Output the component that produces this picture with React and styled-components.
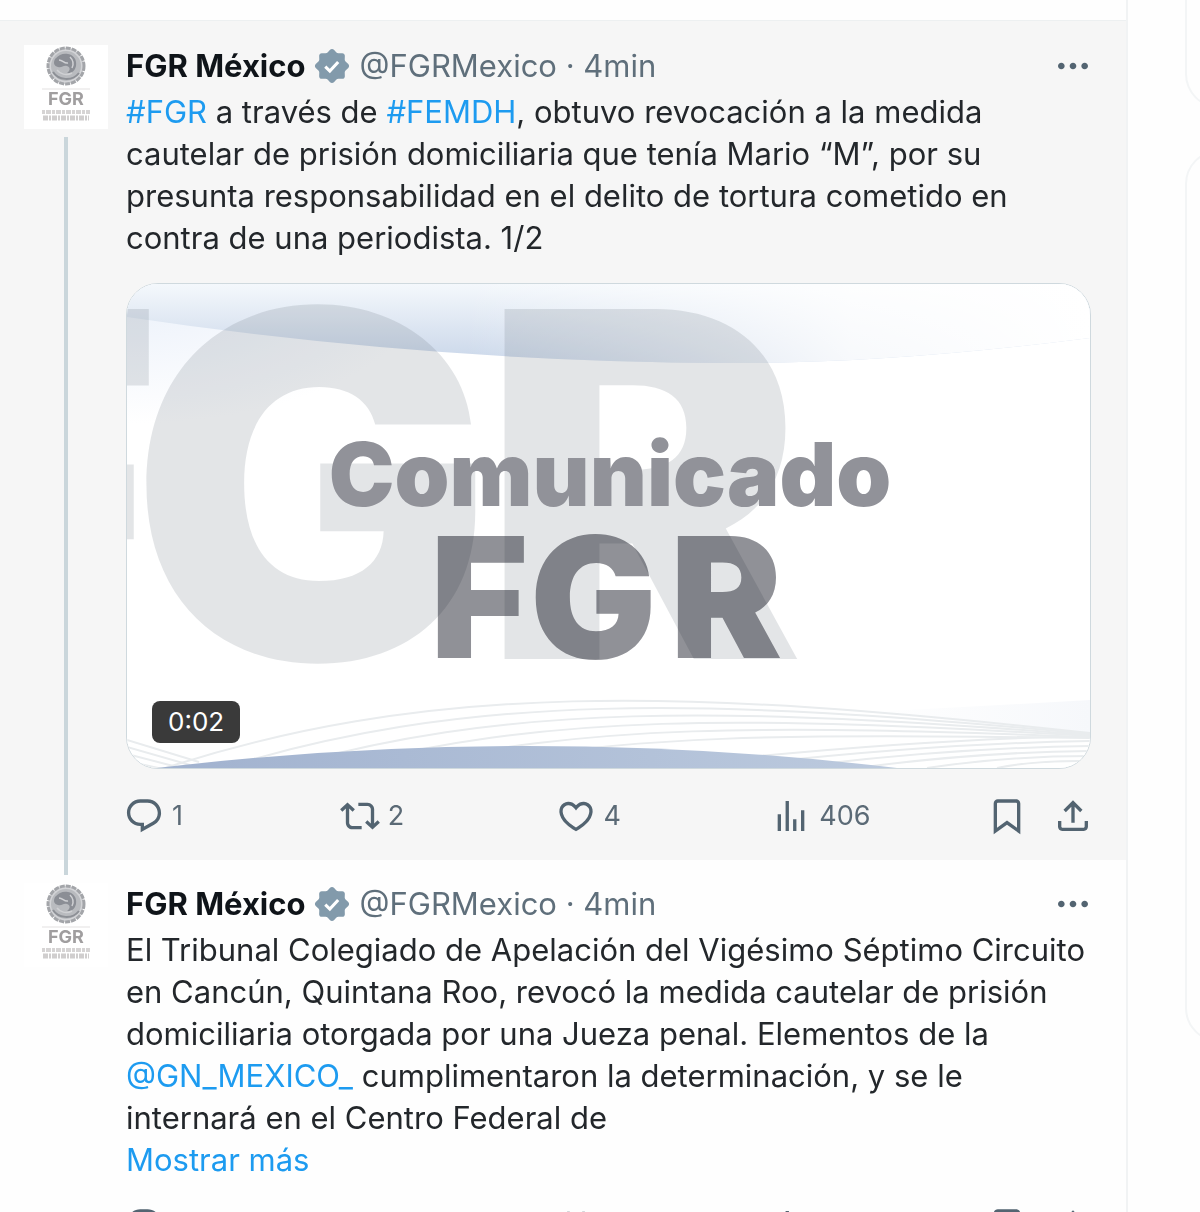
import React from 'react'
import styled, { createGlobalStyle } from 'styled-components'

const GlobalStyle = createGlobalStyle`
  * {
    box-sizing: border-box;
  }
  body {
    margin: 0;
    background: #fefefe;
    color: #23272b;
    font-family: Inter, "Noto Sans", sans-serif;
    font-size: 31px;
    line-height: 42px;
  }
`

const Page = styled.div`
  display: grid;
  grid-template-columns: minmax(0, 1fr) 72px;
  height: 100vh;
  overflow: hidden;
`

const Timeline = styled.main`
  border-right: 2px solid #f1f3f4;
  padding-top: 20px;
  overflow: hidden;
`

const Tweet = styled.article`
  display: flex;
  gap: 18px;
  padding: 0 35px 0 24px;
  background: ${({ $active }) => ($active ? '#f6f6f6' : '#fefefe')};
  border-top: ${({ $active }) => ($active ? '1px solid #edf0f1' : 'none')};
`

const AvatarColumn = styled.div`
  display: flex;
  flex-direction: column;
  align-items: center;
  flex: 0 0 84px;
`

const LineIn = styled.div`
  width: 4px;
  height: 15px;
  margin-bottom: ${({ $on }) => ($on ? 8 : 9)}px;
  background: ${({ $on }) => ($on ? '#cad6db' : 'transparent')};
`

const LineOut = styled.div`
  width: 4px;
  flex: 1;
  margin-top: 8px;
  background: #cad6db;
`

const Avatar = styled.a`
  display: block;
  width: 84px;
  height: 84px;
  background: #fff;

  svg {
    display: block;
  }
`

const Content = styled.div`
  flex: 1;
  min-width: 0;
  padding: ${({ $threaded }) => ($threaded ? 23 : 24)}px 0 24px;
`

const Header = styled.header`
  display: flex;
  align-items: center;
  margin: 0 -2px 4px 0;
`

const Name = styled.a`
  color: #0f1419;
  font-weight: 700;
  text-decoration: none;
`

const Badge = styled.svg`
  width: 40px;
  height: 40px;
  margin: 0 8px 0 6px;
  fill: #829aab;
`

const Meta = styled.span`
  flex: 1;
  color: #5f6f7b;

  a {
    color: inherit;
    text-decoration: none;
  }
`

const Text = styled.p`
  margin: 0;
`

const Line = styled.span`
  display: block;
`

const Link = styled.a`
  color: #1d9bf0;
  text-decoration: none;
`

const Media = styled.div`
  position: relative;
  margin-top: 24px;
  border: 1px solid #cfd9de;
  border-radius: 32px;
  overflow: hidden;
  background: #fff;

  svg {
    display: block;
    width: 100%;
  }
`

const Duration = styled.span`
  position: absolute;
  left: 25px;
  bottom: 25px;
  padding: 0 16px;
  border-radius: 8px;
  background: #3a3a3a;
  color: #fff;
  font-size: 26px;
`

const Actions = styled.div`
  display: flex;
  align-items: center;
  margin: ${({ $afterMedia }) => ($afterMedia ? 27 : 25)}px -2px 0;
`

const IconButton = styled.button`
  display: flex;
  align-items: center;
  gap: 8px;
  flex: ${({ $grow }) => ($grow ? '1' : 'none')};
  margin-left: ${({ $space }) => $space || 0}px;
  padding: 0;
  border: 0;
  background: none;
  color: #5b6a76;
  font-family: inherit;
  font-size: 27px;
  line-height: 40px;
  cursor: pointer;

  svg {
    width: 40px;
    height: 40px;
    fill: #536471;
  }
`

const Sidebar = styled.aside`
  display: flex;
  flex-direction: column;
  gap: 42px;
  padding-left: 57px;
  overflow: hidden;
`

const Card = styled.section`
  flex: none;
  width: 735px;
  height: ${({ $height }) => $height}px;
  border: 2px solid #f3f5f6;
  border-top-width: ${({ $cut }) => ($cut ? 0 : 2)}px;
  border-radius: ${({ $cut }) => ($cut ? '0 0 34px 34px' : '34px')};
`

const paths = {
  reply:
    'M1.751 10c0-4.42 3.584-8 8.005-8h4.366c4.49 0 8.129 3.64 8.129 8.13 0 2.96-1.607 5.68-4.196 7.11l-8.054 4.46v-3.69h-.067c-4.49.1-8.183-3.51-8.183-8.01zm8.005-6c-3.317 0-6.005 2.69-6.005 6 0 3.37 2.77 6.08 6.138 6.01l.351-.01h1.761v2.3l5.087-2.81c1.951-1.08 3.163-3.13 3.163-5.36 0-3.39-2.744-6.13-6.129-6.13H9.756z',
  repost:
    'M4.5 3.88l4.432 4.14-1.364 1.46L5.5 7.55V16c0 1.1.896 2 2 2H13v2H7.5c-2.209 0-4-1.79-4-4V7.55L1.432 9.48.068 8.02 4.5 3.88zM16.5 6H11V4h5.5c2.209 0 4 1.79 4 4v8.45l2.068-1.93 1.364 1.46-4.432 4.14-4.432-4.14 1.364-1.46 2.068 1.93V8c0-1.1-.896-2-2-2z',
  like: 'M16.697 5.5c-1.222-.06-2.679.51-3.89 2.16l-.805 1.09-.806-1.09C9.984 6.01 8.526 5.44 7.304 5.5c-1.243.07-2.349.78-2.91 1.91-.552 1.12-.633 2.78.479 4.82 1.074 1.97 3.257 4.27 7.129 6.61 3.87-2.34 6.052-4.64 7.126-6.61 1.111-2.04 1.03-3.7.477-4.82-.561-1.13-1.666-1.84-2.908-1.91zm4.187 7.69c-1.351 2.48-4.001 5.12-8.379 7.67l-.503.3-.504-.3c-4.379-2.55-7.029-5.19-8.382-7.67-1.36-2.5-1.41-4.86-.514-6.67.887-1.79 2.647-2.91 4.601-3.01 1.651-.09 3.368.56 4.798 2.01 1.429-1.45 3.146-2.1 4.796-2.01 1.954.1 3.714 1.22 4.601 3.01.896 1.81.846 4.17-.514 6.67z',
  views: 'M8.75 21V3h2v18h-2zM18 21V8.5h2V21h-2zM4 21l.004-10h2L6 21H4zm9.248 0v-7h2v7h-2z',
  bookmark:
    'M4 4.5C4 3.12 5.119 2 6.5 2h11C18.881 2 20 3.12 20 4.5v18.44l-8-5.71-8 5.71V4.5zM6.5 4c-.276 0-.5.22-.5.5v14.56l6-4.29 6 4.29V4.5c0-.28-.224-.5-.5-.5h-11z',
  share:
    'M12 2.59l5.7 5.7-1.41 1.42L13 6.41V16h-2V6.41l-3.3 3.3-1.41-1.42L12 2.59zM21 15l-.02 3.51c0 1.38-1.12 2.49-2.5 2.49H5.5C4.11 21 3 19.88 3 18.5V15h2v3.5c0 .28.22.5.5.5h12.98c.28 0 .5-.22.5-.5L19 15h2z',
  more: 'M3 12c0-1.1.9-2 2-2s2 .9 2 2-.9 2-2 2-2-.9-2-2zm9 2c1.1 0 2-.9 2-2s-.9-2-2-2-2 .9-2 2 .9 2 2 2zm7 0c1.1 0 2-.9 2-2s-.9-2-2-2-2 .9-2 2 .9 2 2 2z',
}

function Icon({ name }) {
  return (
    <svg viewBox="0 0 24 24" aria-hidden="true">
      <path d={paths[name]} />
    </svg>
  )
}

function Verified() {
  return (
    <Badge viewBox="0 0 22 22" role="img" aria-label="Cuenta verificada">
      <path d="M12.05 2.056c-.568-.608-1.532-.608-2.1 0l-1.393 1.49c-.284.303-.685.47-1.1.455L5.42 3.932c-.832-.028-1.514.654-1.486 1.486l.069 2.039c.014.415-.152.816-.456 1.1l-1.49 1.392c-.608.568-.608 1.533 0 2.101l1.49 1.393c.304.284.47.684.456 1.1l-.07 2.038c-.027.832.655 1.514 1.487 1.486l2.038-.069c.415-.014.816.152 1.1.455l1.392 1.49c.569.609 1.533.609 2.102 0l1.393-1.49c.283-.303.684-.47 1.099-.455l2.038.069c.832.028 1.515-.654 1.486-1.486L18 14.542c-.015-.415.152-.815.455-1.099l1.49-1.393c.608-.568.608-1.533 0-2.101l-1.49-1.393c-.303-.283-.47-.684-.455-1.1l.068-2.038c.029-.832-.654-1.514-1.486-1.486l-2.038.07c-.415.013-.816-.153-1.1-.456z" />
      <path d="M7.3 11.4l2.5 2.4 4.6-5" fill="none" stroke="#fff" strokeWidth="1.7" />
    </Badge>
  )
}

function Logo() {
  return (
    <svg viewBox="0 0 84 84" width="84" height="84" role="img" aria-label="FGR">
      <circle cx="42" cy="21" r="18" fill="#d3d4d7" stroke="#a3a5a9" strokeWidth="3" strokeDasharray="5 1" />
      <circle cx="42" cy="21" r="15" fill="#b9bbbf" />
      <path d="M31 14c4-5 9-6 13-5 6 1 9 6 8 12-1 5-5 8-9 7 4-3 3-6 0-7-4-1-5 2-9 1s-5-4-3-8z" fill="#8b8e95" />
      <path d="M35 15c4 0 5 4 9 3M33 25c3 4 9 6 15 3M46 12c3 3 4 7 2 11" fill="none" stroke="#d0d1d4" strokeWidth="1.5" />
      <path d="M29 27c5 8 19 10 26 1" fill="none" stroke="#8d9096" strokeWidth="2" />
      <path d="M18 44h48" stroke="#e3e1e1" />
      <text x="42" y="60" textAnchor="middle" fontSize="18" fontWeight="700" fill="#a09e9f">FGR</text>
      <path d="M18 67h48" stroke="#d6d4d4" strokeWidth="4" strokeDasharray="3 1 5 1" />
      <path d="M19 73h46" stroke="#d0cece" strokeWidth="5" strokeDasharray="5 1 2 1" />
    </svg>
  )
}

const lines = [0, 1, 2, 3, 4, 5]

function Poster() {
  return (
    <svg viewBox="0 0 963 484" role="img" aria-label="Comunicado FGR">
      <defs>
        <linearGradient id="skyDown" x1="0" y1="0" x2="0" y2="1">
          <stop offset="0" stopColor="#f4f8fc" />
          <stop offset="1" stopColor="#c9d6e9" />
        </linearGradient>
        <linearGradient id="skyFade" x1="0" y1="0" x2="1" y2="0">
          <stop offset="0.35" stopColor="#fff" stopOpacity="0" />
          <stop offset="0.75" stopColor="#fff" stopOpacity="0.85" />
          <stop offset="1" stopColor="#fff" />
        </linearGradient>
        <radialGradient id="haze" cx="0" cy="0" r="1">
          <stop offset="0.2" stopColor="#eef3fb" />
          <stop offset="1" stopColor="#fff" />
        </radialGradient>
        <linearGradient id="mist" x1="0" y1="0" x2="1" y2="0">
          <stop offset="0" stopColor="#fff" />
          <stop offset="1" stopColor="#f6f8fb" />
        </linearGradient>
        <linearGradient id="hill" x1="0" y1="0" x2="1" y2="0">
          <stop offset="0" stopColor="#a1b2cf" />
          <stop offset="1" stopColor="#bccade" />
        </linearGradient>
      </defs>
      <rect width="963" height="484" fill="#fff" />
      <rect width="300" height="140" fill="url(#haze)" />
      <path d="M0 0H963V54Q760 80 600 79Q300 78 0 33z" fill="url(#skyDown)" />
      <path d="M0 0H963V54Q760 80 600 79Q300 78 0 33z" fill="url(#skyFade)" />
      <g fill="#6b7480" fillOpacity="0.19" fontSize="481" fontWeight="900">
        <text x="34" y="375" textAnchor="end">F</text>
        <text x="3" y="375">G</text>
        <text x="355" y="375">R</text>
      </g>
      <path d="M963 416Q860 422 740 428L963 450z" fill="url(#mist)" />
      <g fill="none" stroke="#e9ecee" strokeWidth="2">
        {lines.map((n) => (
          <path key={n} d={`M${20 + n * 60} ${490 - n}C${300 + n * 40} ${395 + n * 11} ${560 + n * 20} ${405 + n * 9} 963 ${449 + n}`} />
        ))}
        {lines.map((n) => (
          <path key={n} d={`M${520 + n * 70} 484Q${760 + n * 30} ${456 + n * 4} 963 ${452 + n * 5}`} />
        ))}
        {lines.slice(0, 4).map((n) => (
          <path key={n} d={`M0 ${456 + n * 7}L${72 - n * 9} ${478 + n * 3}`} />
        ))}
      </g>
      <path d="M30 484Q400 440 770 484z" fill="url(#hill)" />
      <g fontWeight="900">
        <text x="483" y="222" textAnchor="middle" fontSize="88" fill="#919299">Comunicado</text>
        <g fontSize="168" fill="#909197" style={{ mixBlendMode: 'multiply' }}>
          <text x="303" y="374">F</text>
          <text x="403" y="374">G</text>
          <text x="543" y="374">R</text>
        </g>
      </g>
    </svg>
  )
}

function ActionBar({ counts, afterMedia }) {
  return (
    <Actions $afterMedia={afterMedia}>
      <IconButton $grow aria-label="Responder">
        <Icon name="reply" />
        {counts.replies}
      </IconButton>
      <IconButton $grow aria-label="Repostear">
        <Icon name="repost" />
        {counts.reposts}
      </IconButton>
      <IconButton $grow aria-label="Me gusta">
        <Icon name="like" />
        {counts.likes}
      </IconButton>
      <IconButton $grow aria-label="Ver estadísticas">
        <Icon name="views" />
        {counts.views}
      </IconButton>
      <IconButton aria-label="Guardar">
        <Icon name="bookmark" />
      </IconButton>
      <IconButton $space={26} aria-label="Compartir">
        <Icon name="share" />
      </IconButton>
    </Actions>
  )
}

function TweetItem({ active, threaded, counts, children, media }) {
  return (
    <Tweet $active={active}>
      <AvatarColumn>
        <LineIn $on={threaded} />
        <Avatar href="#perfil">
          <Logo />
        </Avatar>
        {active && <LineOut />}
      </AvatarColumn>
      <Content $threaded={threaded}>
        <Header>
          <Name href="#perfil">FGR México</Name>
          <Verified />
          <Meta>
            <a href="#perfil">@FGRMexico</a> · <a href="#tweet">4min</a>
          </Meta>
          <IconButton aria-label="Más opciones">
            <Icon name="more" />
          </IconButton>
        </Header>
        <Text>{children}</Text>
        {media}
        <ActionBar counts={counts} afterMedia={Boolean(media)} />
      </Content>
    </Tweet>
  )
}

function App() {
  return (
    <>
      <GlobalStyle />
      <Page>
        <Timeline>
          <TweetItem
            active
            counts={{ replies: 1, reposts: 2, likes: 4, views: 406 }}
            media={
              <Media>
                <Poster />
                <Duration>0:02</Duration>
              </Media>
            }
          >
            <Line>
              <Link href="#fgr">#FGR</Link> a través de <Link href="#femdh">#FEMDH</Link>, obtuvo revocación a la medida
            </Line>
            <Line>cautelar de prisión domiciliaria que tenía Mario “M”, por su</Line>
            <Line>presunta responsabilidad en el delito de tortura cometido en</Line>
            <Line>contra de una periodista. 1/2</Line>
          </TweetItem>
          <TweetItem threaded counts={{}}>
            <Line>El Tribunal Colegiado de Apelación del Vigésimo Séptimo Circuito</Line>
            <Line>en Cancún, Quintana Roo, revocó la medida cautelar de prisión</Line>
            <Line>domiciliaria otorgada por una Jueza penal. Elementos de la</Line>
            <Line>
              <Link href="#gn">@GN_MEXICO_</Link> cumplimentaron la determinación, y se le
            </Line>
            <Line>internará en el Centro Federal de</Line>
            <Link href="#mas">Mostrar más</Link>
          </TweetItem>
        </Timeline>
        <Sidebar>
          <Card $cut $height={108} />
          <Card $height={892} />
        </Sidebar>
      </Page>
    </>
  )
}

export default App
